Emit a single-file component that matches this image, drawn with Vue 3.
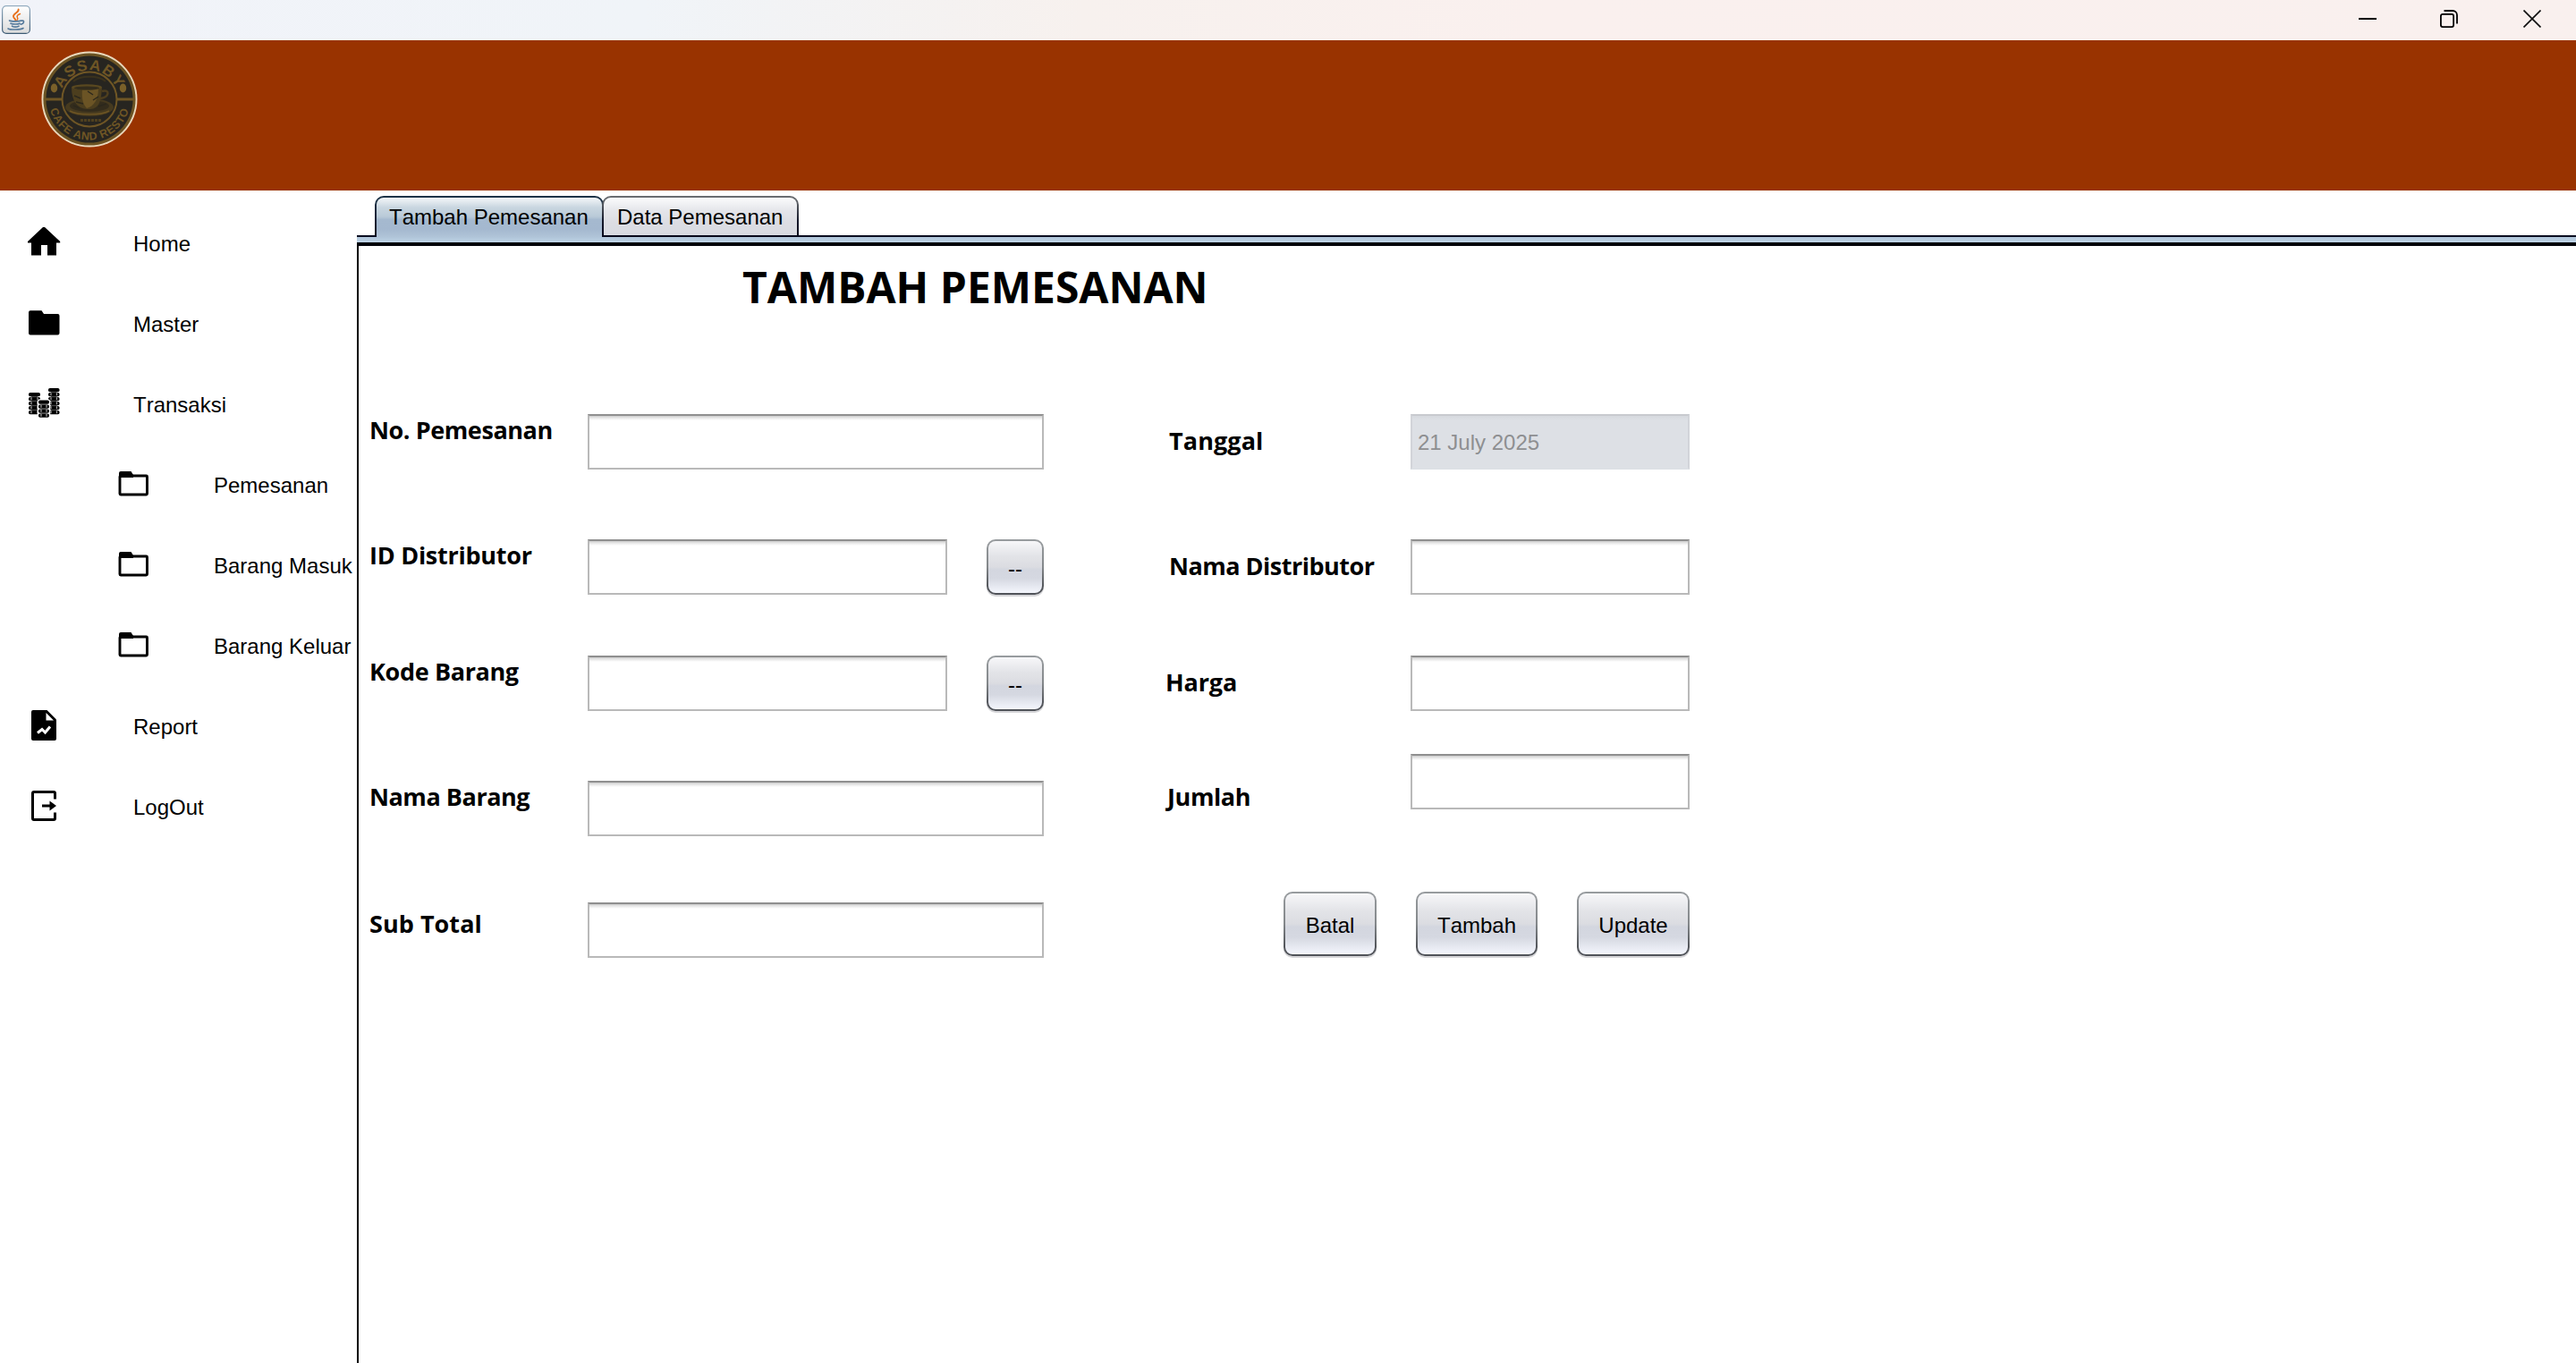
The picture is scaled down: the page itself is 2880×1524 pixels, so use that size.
<script setup>
const menu = [
  { label: 'Home', icon: 'home' },
  { label: 'Master', icon: 'folder' },
  { label: 'Transaksi', icon: 'coins' },
  { label: 'Pemesanan', icon: 'folder-open', sub: true },
  { label: 'Barang Masuk', icon: 'folder-open', sub: true },
  { label: 'Barang Keluar', icon: 'folder-open', sub: true },
  { label: 'Report', icon: 'report' },
  { label: 'LogOut', icon: 'logout' },
]

// Three stacks of coins: x, width and the y of each disc
const coinStacks = [
  { x: 7, w: 13, rows: [11, 16, 21, 26, 31] },
  { x: 29, w: 12.5, rows: [6, 11, 16, 21, 26, 31] },
  { x: 18, w: 12, rows: [19.5, 24.5, 29.5, 34.5] },
]

const leftFields = [
  { label: 'No. Pemesanan', spacing: -0.42, cls: 'high' },
  { label: 'ID Distributor', spacing: -0.26, cls: 'high', picker: true },
  { label: 'Kode Barang', spacing: -0.36, cls: 'high', picker: true },
  { label: 'Nama Barang', spacing: -0.45, cls: 'high' },
  { label: 'Sub Total', spacing: 0.05, cls: 'mid' },
]

const rightFields = [
  { label: 'Tanggal', spacing: 0.1, cls: 'low inset', value: '21 July 2025' },
  { label: 'Nama Distributor', spacing: -0.5, cls: 'low inset' },
  { label: 'Harga', spacing: -0.15, cls: 'low' },
  { label: 'Jumlah', spacing: -0.4, cls: 'lowest' },
]
</script>

<template>
  <div class="window">
    <div class="titlebar">
      <svg class="java" width="32" height="32" viewBox="0 0 32 32">
        <defs>
          <linearGradient id="jb" x1="0" y1="0" x2="0" y2="1">
            <stop offset="0" stop-color="#94adc0" />
            <stop offset="1" stop-color="#3c5a74" />
          </linearGradient>
          <linearGradient id="jf" x1="0" y1="0" x2="0" y2="1">
            <stop offset="0" stop-color="#ffffff" />
            <stop offset="1" stop-color="#dcdcdc" />
          </linearGradient>
        </defs>
        <rect x=".6" y=".6" width="30.8" height="30.8" rx="4.5" fill="url(#jf)" stroke="url(#jb)" stroke-width="1.2" />
        <g fill="none" stroke="#e8701a" stroke-linecap="round">
          <path d="M18.6 4.5C19.5 8 12.5 9 13 12.5c.2 1.700 1.800 2.200 2.300 3.800" stroke-width="1.9" />
          <path d="M20.500 9.500c-3 1-4 2.500-3 4.200.8 1.200.5 2-.5 2.800" stroke-width="1.500" />
        </g>
        <g fill="none" stroke="#55799b" stroke-linecap="round" stroke-width="1.600">
          <path d="M8.500 17c2 1.200 11 1.200 13.500 0M10 20.200c2.500 1.100 8 1.100 10 0M11.500 23.200c2 1 5.500 1 7.500 0M22 17.300c3.500-1.200 3.500 3-.8 4M7 26c2.500 1.500 14 1.500 17-.5" />
        </g>
      </svg>
      <div class="caption">
        <svg width="20" height="20" viewBox="0 0 20 20"><path d="M0 10h20" stroke="#000" stroke-width="2" /></svg>
        <svg width="20" height="20" viewBox="0 0 20 20" fill="none" stroke="#000" stroke-width="1.800">
          <rect x=".9" y="4.900" width="14.200" height="14.200" rx="2" />
          <path d="M4.500 1H14a5 5 0 0 1 5 5v9.500" />
        </svg>
        <svg width="20" height="20" viewBox="0 0 20 20"><path d="M.5.5l19 19M19.500.5l-19 19" stroke="#111" stroke-width="1.700" /></svg>
      </div>
    </div>

    <header class="banner">
      <svg class="logo" width="110" height="110" viewBox="-55 -55 110 110">
        <defs>
          <path id="arcTop" d="M-32.500 0A32.500 32.500 0 0 1 32.500 0" />
          <path id="arcBottom" d="M-45.500 0A45.500 45.500 0 0 0 45.500 0" />
        </defs>
        <circle r="53.500" fill="#ead9bd" />
        <circle r="51.600" fill="#6b5323" />
        <circle r="48.600" fill="#272520" />
        <circle r="30.500" fill="none" stroke="#6f5625" stroke-width="2" />
        <path d="M-50 0h19.500M30.500 0h19.500" stroke="#6f5625" stroke-width="3" />
        <ellipse cx="-39.500" cy="-12.500" rx="3.700" ry="5" fill="#7a6029" />
        <ellipse cx="37.500" cy="-12.500" rx="3.700" ry="5" fill="#7a6029" />
        <text class="logo-top" text-anchor="middle"><textPath href="#arcTop" startOffset="50%">ASSABY</textPath></text>
        <text class="logo-bottom" text-anchor="middle"><textPath href="#arcBottom" startOffset="50%">CAFE AND RESTO</textPath></text>
        <path d="M-18-20c8-7 28-7 36 0" fill="none" stroke="#3a321d" stroke-width="2" />
        <ellipse cx="0" cy="9" rx="27" ry="10" fill="#463a1f" />
        <ellipse cx="0" cy="7.500" rx="22" ry="6.500" fill="#332c1c" />
        <path d="M-20-13C-20 0-15 10-3 11S13 6 14-13z" fill="#4c3e1e" />
        <path d="M-8-12C-9 0-7 6-3 10 5 8 10 0 10-12z" fill="#6b5425" />
        <path d="M14-9c9-3 9 7-2 8" fill="none" stroke="#4d3e1e" stroke-width="2.500" />
        <path d="M-17-4l7 3M-15 3l8 2M-2-9l6 4M4 1l6-4M-18 7l7 3M10 8l9-3" stroke="#2c281c" stroke-width="1.500" />
        <ellipse cx="-3" cy="-13.500" rx="17" ry="3.200" fill="#594820" />
        <ellipse cx="-3" cy="-12.500" rx="14" ry="2" fill="#332c1c" />
        <path d="M-22 13c8 5 36 5 44 0" fill="none" stroke="#6b5323" stroke-width="1.500" />
        <path d="M-10 23.500H13" stroke="#4f401f" stroke-width="2.800" stroke-dasharray="3 1" />
      </svg>
    </header>

    <div class="body">
      <nav class="sidebar">
        <div v-for="item in menu" :key="item.label" class="item" :class="{ sub: item.sub }">
          <svg width="48" height="48" viewBox="0 0 48 48">
            <path v-if="item.icon === 'home'" d="M23 6h2L42.200 22v1.500H38V37.500H28V26h-7v11.500H10V23.500H6V22z" />
            <path v-else-if="item.icon === 'folder'" d="M9 9.200h12.500L24 13h15.500a2 2 0 0 1 2 2v19.500a2 2 0 0 1-2 2H9a2 2 0 0 1-2-2V11.200a2 2 0 0 1 2-2z" />
            <g v-else-if="item.icon === 'coins'">
              <g v-for="(s, i) in coinStacks" :key="s.x">
                <rect v-if="i === 2" x="16.800" y="18.300" width="14.400" height="22" rx="3" fill="#fff" />
                <rect v-for="y in s.rows" :key="y" :x="s.x" :y="y" :width="s.w" height="4.200" rx="1.800" />
                <rect v-for="y in s.rows.slice(1)" :key="'m' + y" :x="s.x + 3" :y="y - 1.200" :width="s.w - 6" height="1.400" fill="#444" />
                <path v-for="y in s.rows.slice(1)" :key="'l' + y" :d="`M${s.x + 3} ${y + 0.300}v3M${s.x + s.w - 3} ${y + 0.300}v3`" stroke="#aaa" stroke-width="1.200" />
              </g>
            </g>
            <g v-else-if="item.icon === 'folder-open'">
              <path d="M10 9h11.500L24 13v3H8V11a2 2 0 0 1 2-2z" />
              <rect x="9" y="14" width="30.500" height="21" rx="1" fill="none" stroke="#000" stroke-width="2.900" />
            </g>
            <g v-else-if="item.icon === 'report'">
              <path d="M12 6h15.500L38 16.500V38a2 2 0 0 1-2 2H12a2 2 0 0 1-2-2V8a2 2 0 0 1 2-2z" />
              <path d="M26.500 9v8.500H35z" fill="#fff" />
              <path d="M17 31.500l5-4 3.500 3.500 5.500-6.500" fill="none" stroke="#fff" stroke-width="3" />
            </g>
            <g v-else fill="none" stroke="#000" stroke-width="3">
              <path d="M36.500 15.500V9a1.500 1.500 0 0 0-1.500-1.500H13A1.500 1.500 0 0 0 11.500 9V37A1.500 1.500 0 0 0 13 38.500H35a1.500 1.500 0 0 0 1.500-1.500V30.500" />
              <path d="M22 23h11" />
              <path d="M30.500 17.500L38 23l-7.500 5.500z" fill="#000" stroke="none" />
            </g>
          </svg>
          <span>{{ item.label }}</span>
        </div>
      </nav>

      <main class="main">
        <div class="tabs">
          <div class="tab active">Tambah Pemesanan</div>
          <div class="tab">Data Pemesanan</div>
        </div>
        <div class="tabline"></div>

        <section class="panel">
          <h1>TAMBAH PEMESANAN</h1>
          <div class="form">
            <div class="col left">
              <div v-for="f in leftFields" :key="f.label" class="row" :class="f.cls">
                <label :style="{ letterSpacing: f.spacing + 'px' }">{{ f.label }}</label>
                <div class="input"></div>
                <button v-if="f.picker" class="btn pick">--</button>
              </div>
            </div>
            <div class="col right">
              <div v-for="f in rightFields" :key="f.label" class="row" :class="f.cls">
                <label :style="{ letterSpacing: f.spacing + 'px' }">{{ f.label }}</label>
                <div class="input" :class="{ disabled: f.value }">{{ f.value }}</div>
              </div>
              <div class="actions">
                <button class="btn batal">Batal</button>
                <button class="btn tambah">Tambah</button>
                <button class="btn update">Update</button>
              </div>
            </div>
          </div>
        </section>
      </main>
    </div>
  </div>
</template>

<style>
body {
  margin: 0;
  background: #fff;
}
</style>

<style scoped>
.window {
  width: 2880px;
  height: 1524px;
  display: flex;
  flex-direction: column;
  overflow: hidden;
  background: #fff;
  color: #000;
  font: 24px/27px "Liberation Sans", Arial, sans-serif;
  font-kerning: none;
}
.titlebar {
  height: 45px;
  flex: none;
  display: flex;
  justify-content: space-between;
  align-items: flex-start;
  background: linear-gradient(90deg, #f1f3f9 0%, #f0f4f8 25%, #f7f1ee 42%, #faf0ee 60%, #f9f0ee 100%);
}
.java {
  margin: 6px 0 0 2px;
}
.caption {
  display: flex;
  gap: 72px;
  margin: 11px 39px 0 0;
}
.caption svg:first-child {
  margin-right: -1px;
}
.caption svg:last-child {
  margin-left: 1px;
}
.banner {
  height: 168px;
  flex: none;
  display: flex;
  align-items: flex-start;
  background: #993300;
}
.logo {
  display: block;
  margin: 11px 0 0 45px;
}
.logo text {
  font-family: "Liberation Sans", Arial, sans-serif;
  font-weight: bold;
  fill: #6f5625;
}
.logo-top {
  font-size: 17px;
  letter-spacing: 1.2px;
}
.logo-bottom {
  font-size: 12.5px;
  letter-spacing: 0.6px;
}
.body {
  flex: 1;
  display: flex;
}
.sidebar {
  width: 399px;
  flex: none;
  padding-top: 14px;
}
.item {
  height: 90px;
  display: flex;
  align-items: center;
  padding-left: 25px;
}
.item svg {
  flex: none;
  margin-right: 76px;
}
.item.sub {
  padding-left: 125px;
}
.item.sub svg {
  margin-right: 66px;
}
.item span {
  margin-top: 1px;
  white-space: nowrap;
}
.main {
  flex: 1;
  display: flex;
  flex-direction: column;
}
.tabs {
  display: flex;
  height: 46px;
  padding: 6px 0 0 20px;
  margin-bottom: -2px;
  position: relative;
  z-index: 1;
}
.tab {
  box-sizing: border-box;
  width: 220px;
  height: 46px;
  padding: 8px 0 0 15px;
  margin-left: -2px;
  border: 2px solid transparent;
  border-radius: 10px 10px 0 0;
  white-space: nowrap;
  background:
    linear-gradient(#fbfbfc 0%, #e4e5ea 35%, #dcdde3 65%, #d8dae1 100%) padding-box,
    linear-gradient(#6c6f73 0%, #55595f 20%, #14182a 60%, #04061a 100%) border-box;
}
.tab.active {
  width: 256px;
  margin-left: 0;
  padding-left: 14px;
  border-bottom: 0;
  background:
    linear-gradient(#f4f7f9 0%, #c9d6e0 25%, #b9cad8 48%, #a5b9cf 56%, #a4b8cf 80%, #b0c4d8 100%) padding-box,
    linear-gradient(#1d3448 0%, #152438 50%, #080b20 100%) border-box;
}
.tabline {
  height: 6px;
  border-top: 2px solid #0a0d20;
  border-bottom: 4px solid #000208;
  background: linear-gradient(#b0c5d9, #bfd4e6);
}
.panel {
  flex: 1;
  border-left: 2px solid #000;
  padding: 13px 0 0 12px;
}
h1 {
  margin: 0 0 110px 417px;
  font: bold 48px/65px "Open Sans", "Noto Sans", sans-serif;
  font-kerning: auto;
}
.form {
  display: flex;
  gap: 135px;
}
.row {
  display: flex;
  align-items: flex-start;
  height: 62px;
}
.left .row {
  margin-bottom: 78px;
}
.left .row:nth-child(2) {
  margin-bottom: 68px;
}
.left .row:nth-child(4) {
  margin-bottom: 74px;
}
.right .row {
  margin-bottom: 78px;
}
.right .row:nth-child(2) {
  margin-bottom: 68px;
}
.right .row:nth-child(3) {
  margin-bottom: 48px;
}
.right .row:nth-child(4) {
  margin-bottom: 92px;
}
label {
  box-sizing: border-box;
  flex: none;
  width: 244px;
  font: bold 27px/37px "Open Sans", "Noto Sans", sans-serif;
  font-kerning: auto;
  white-space: nowrap;
}
.right label {
  width: 275px;
  padding-left: 1px;
}
.right .inset label {
  padding-left: 5px;
}
.high label {
  margin-top: -1px;
}
.mid label {
  margin-top: 5px;
}
.low label {
  margin-top: 11px;
}
.right .lowest label {
  margin-top: 29px;
  padding-left: 3px;
}
.input {
  box-sizing: border-box;
  flex: none;
  width: 510px;
  height: 62px;
  border: 2px solid #b9b9b9;
  border-top-color: #8f8f8f;
  background: linear-gradient(#cacaca 0, #e6e6e6 2px, #fff 5px);
  padding: 16px 0 0 6px;
}
.row:has(.pick) .input {
  width: 402px;
}
.right .input {
  width: 312px;
}
.right .input.disabled {
  border-color: #d2d4d9;
  border-top-color: #c8cacf;
  border-bottom-color: #dce0e5;
  background: linear-gradient(#d6d9de 0, #dde0e5 5px);
  color: #8e8f91;
}
.btn {
  box-sizing: border-box;
  height: 72px;
  padding: 3px 0 0;
  border: 2px solid transparent;
  border-radius: 10px;
  font: inherit;
  font-kerning: none;
  color: #000;
  background:
    linear-gradient(#f7f7f9 0%, #e3e4e8 28%, #dbdce1 50%, #d3d6df 55%, #d5d8e1 72%, #f4f6fd 100%) padding-box,
    linear-gradient(#989c9f 0%, #83878a 50%, #53565b 85%, #505359 100%) border-box;
  box-shadow: 0 2px 0 #d5d5d8;
}
.pick {
  width: 64px;
  height: 62px;
  margin-left: 44px;
}
.actions {
  display: flex;
  margin-left: 133px;
}
.batal {
  width: 104px;
}
.tambah {
  width: 136px;
  margin: 0 44px;
}
.update {
  width: 126px;
}
</style>
